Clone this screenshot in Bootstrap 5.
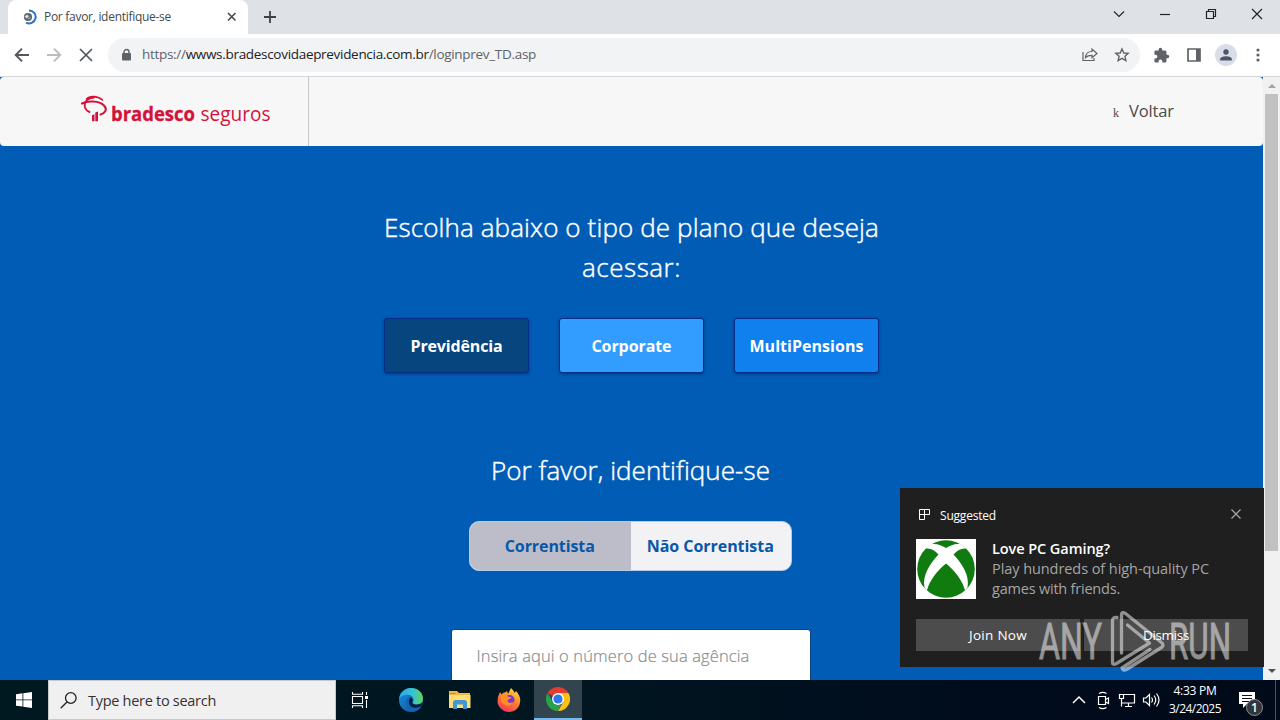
<!DOCTYPE html>
<html lang="pt-BR">
<head>
    <meta charset="UTF-8">
    <meta name="viewport" content="width=device-width, initial-scale=1">
    <title>Por favor, identifique-se</title>
    <link href="https://cdn.jsdelivr.net/npm/bootstrap@5.3.0/dist/css/bootstrap.min.css" rel="stylesheet">
    <style>
        body {
            width: 1280px;
            height: 720px;
            font-family: "Open Sans", "Noto Sans", sans-serif;
            font-size: 14px;
            line-height: 1;
        }
        svg { display: block; flex: none; }
        span, h1, h2, p { white-space: nowrap; }

        /* browser window */
        .tab-strip { height: 34px; background: #dee1e6; padding-left: 8px; }
        .browser-tab {
            width: 240px;
            height: 34px;
            padding: 0 10px 0 14px;
            background: #fff;
            border-radius: 8px 8px 0 0;
            font-size: 12px;
            color: #45494d;
        }
        .toolbar-row { height: 43px; padding: 0 13px 0 14px; background: #fff; border-bottom: 1px solid #d5d7da; }
        .address-bar {
            width: 1032px;
            height: 34px;
            margin-left: 14px;
            padding: 0 10px 0 11px;
            border-radius: 17px;
            background: #f1f3f4;
            font-size: 13.5px;
            color: #5f6368;
        }
        .address-bar b { font-weight: 400; color: #202124; }
        .avatar-dot { width: 22px; height: 22px; border-radius: 50%; background: #dadce8; }

        /* page */
        .page-view { height: 603px; }
        .page-body { width: 1263px; background: #005cb5; }
        .page-body > * { flex: none; }
        .site-header { height: 69px; background: #f7f7f7; border-radius: 4px; }
        .brand-cell { width: 309px; border-right: 1px solid #c8c8c8; padding: 18px 0 0 80px; }
        .back-link { padding: 0 89px 0 0; color: #4a4a4a; font-size: 16.5px; }
        .back-link small { width: 7px; font-family: "Liberation Serif", serif; font-size: 12px; margin: 3px 9px 0 0; }
        .page-title {
            font-family: "Open Sans", "Noto Sans", sans-serif;
            font-size: 26px;
            font-weight: 300;
            line-height: 40px;
            color: #fff;
            -webkit-text-stroke: .45px #fff;
        }
        .plan-row { gap: 30px; margin-top: 31px; }
        .plan-btn {
            width: 145px;
            height: 55px;
            padding: 0;
            border: 1px solid #052c86;
            border-radius: 3px;
            box-shadow: 0 1px 3px rgba(0, 20, 80, .55);
            color: #fff;
            font-size: 16px;
            font-weight: 700;
        }
        .plan-a { background: #07457f; }
        .plan-b { background: #339cff; }
        .plan-c { background: #0f80ee; }
        .ident-block { padding-right: 2px; }
        .client-switch { width: 323px; height: 50px; border-radius: 10px; border: 1px solid #b5cbea; background: #f2f2f5; overflow: hidden; }
        .client-switch button { width: 50%; height: 100%; border: 0; padding: 0 1px 0 0; background: none; color: #0857a8; font-size: 16px; font-weight: 700; }
        .client-switch .picked { background: #bdbdc9; }
        .agency-input {
            width: 360px;
            height: 55px;
            padding: 0 24px 2px 25px;
            background: #fff;
            border: 1px solid #0a478b;
            border-radius: 3px 3px 0 0;
            border-bottom: 0;
            color: #8c8c8c;
            font-size: 16.5px;
            font-weight: 300;
            -webkit-text-stroke: .2px #8c8c8c;
        }
        .scroll-rail { width: 17px; background: #f1f1f1; }
        .scroll-thumb { width: 13px; height: 457px; background: #c1c1c1; }

        /* toast */
        .os-toast {
            right: 16px;
            top: 488px;
            width: 364px;
            height: 179px;
            padding: 16px;
            background: #1f1f1f;
            color: #fff;
        }
        .toast-action { width: 164px; height: 32px; padding-top: 1px; background: #4c4c4c; font-size: 13.5px; }
        .watermark { left: 1036px; top: 606px; }

        /* taskbar */
        .task-bar { height: 40px; background: linear-gradient(90deg, #001820 0, #001620 45%, #000b1c 80%, #000a18 100%); color: #fff; }
        .task-cell { width: 48px; height: 40px; }
        .task-search { width: 288px; height: 40px; padding: 2px 0 0 11px; background: #f0f0f0; border: 1px solid #c9c9c9; color: #333; font-size: 14.5px; }
        .task-active { background: #32444d; border-bottom: 2px solid #76b9ed; }
        .clock-cell { width: 60px; font-size: 12px; line-height: 18px; }
    </style>
</head>
<body class="d-flex flex-column overflow-hidden position-relative">

    <div class="tab-strip d-flex align-items-center">
        <div class="browser-tab d-flex align-items-center">
            <svg width="16" height="16" viewBox="0 0 16 16">
                <circle cx="6" cy="8" r="4.100" fill="#5f6368"/>
                <path d="M3 7.500l2.500-1.500 1 1.500-2 1.500zM6 10l2.500-1.500" fill="#dfe3e6" stroke="#dfe3e6" stroke-width=".8"/>
                <path d="M7 1.500a6.500 6.500 0 1 1-3 12.200" fill="none" stroke="#2f6fce" stroke-width="2"/>
            </svg>
            <span id="t-tab" style="margin-left: 6px">Por favor, identifique-se</span>
            <svg class="ms-auto" width="12" height="12" viewBox="0 0 12 12" stroke="#45494d" stroke-width="1.600"><path d="M2 2l7.500 7.500M9.500 2L2 9.500"/></svg>
        </div>
        <svg style="margin-left: 15px" width="14" height="14" viewBox="0 0 14 14" stroke="#3c4043" stroke-width="1.800"><path d="M7 1v12M1 7h12"/></svg>
        <svg class="ms-auto" width="170" height="34" viewBox="1110 0 170 34" fill="none" stroke="#222" stroke-width="1.100">
            <path d="M1114 11.500l5 5 5-5"/>
            <path d="M1160 14.500h10" stroke-width="1.200"/>
            <path d="M1206.500 11.500h7v7h-7zM1208.500 11.500v-2h7v7h-2" stroke-width="1.200"/>
            <path d="M1252 9l10 10M1262 9l-10 10" stroke-width="1.200"/>
        </svg>
    </div>

    <div class="toolbar-row d-flex align-items-center">
        <svg width="80" height="16" viewBox="14 0 80 16" fill="none" stroke="#53575b" stroke-width="1.900">
            <path d="M29 8H16M22 1.700L15.700 8l6.300 6.300"/>
            <path d="M47 8h13M54 1.700L60.300 8 54 14.300" stroke="#babcbe"/>
            <path d="M80 2l12 12M92 2L80 14" stroke-width="1.700"/>
        </svg>
        <div class="address-bar d-flex align-items-center">
            <svg width="14" height="14" viewBox="0 0 14 14"><rect x="3" y="5" width="9" height="7.500" rx="1" fill="#5f6368"/><path d="M5 6V4a2.500 2.500 0 0 1 5 0v2" fill="none" stroke="#5f6368" stroke-width="1.400"/></svg>
            <span id="t-url" style="margin-left: 9px">https://<b>wwws.bradescovidaeprevidencia.com.br</b>/loginprev_TD.asp</span>
            <svg class="ms-auto" width="16" height="16" viewBox="0 0 16 16" fill="none" stroke="#5f6368" stroke-width="1.200"><path d="M1 5v8.500h11V11"/><path d="M3.500 10.500c.3-4 2.700-6 6.500-6V2l5 4.500-5 4.300V8.300c-3 0-5 .6-6.500 2.200z"/></svg>
            <svg style="margin-left: 16px" width="16" height="16" viewBox="0 0 16 16" fill="none" stroke="#5f6368" stroke-width="1.400"><path d="M8 2l1.800 4 4.400.4-3.300 2.900 1 4.200L8 11.300l-3.900 2.200 1-4.200L1.800 6.400 6.200 6z"/></svg>
        </div>
        <svg style="margin-left: 13px" width="17" height="17" viewBox="0 0 24 24" fill="#5f6368"><path d="M20.500 11H19V7a2 2 0 0 0-2-2h-4V3.500a2.500 2.500 0 0 0-5 0V5H4a2 2 0 0 0-2 2v3.800h1.500a2.700 2.700 0 0 1 0 5.400H2V20a2 2 0 0 0 2 2h3.800v-1.500a2.700 2.700 0 0 1 5.400 0V22H17a2 2 0 0 0 2-2v-4h1.500a2.500 2.500 0 0 0 0-5z"/></svg>
        <svg style="margin-left: 17px" width="14" height="14" viewBox="0 0 14 14"><path d="M1 1h12v12H1z" fill="none" stroke="#5f6368" stroke-width="1.700"/><path d="M9 1h4v12H9z" fill="#5f6368"/></svg>
        <div class="avatar-dot d-flex align-items-center justify-content-center" style="margin-left: 14px">
            <svg width="14" height="14" viewBox="0 0 14 14" fill="#4c5468"><circle cx="7" cy="4" r="2.700"/><path d="M1.200 12.500v-1.500C1.200 9 5 8.200 7 8.200s5.800.8 5.800 2.800v1.500z"/></svg>
        </div>
        <svg style="margin-left: 19px" width="4" height="16" viewBox="0 0 4 16" fill="#5f6368"><circle cx="2" cy="3" r="1.600"/><circle cx="2" cy="8" r="1.600"/><circle cx="2" cy="13" r="1.600"/></svg>
    </div>

    <div class="page-view d-flex">
        <main class="page-body d-flex flex-column align-items-center overflow-hidden">
            <header class="site-header d-flex w-100">
                <div class="brand-cell">
                    <svg width="196" height="36" viewBox="80 95 196 36" font-family="Open Sans, sans-serif" fill="#d3123a">
                        <g fill="none" stroke="#d3123a" stroke-linecap="round">
                            <path d="M86.500 99C89.500 95.700 97 95.500 102.500 100" stroke-width="1.600"/>
                            <path d="M82 103.500C87 100.700 99 100.500 104 105.500C108 110 104.500 113.500 100.500 114.500" stroke-width="2.100"/>
                            <path d="M94 97.500C88 97.500 83.500 102 85 107.500c.8 2.300 2.500 3.800 4.500 4.500" stroke-width="1.900"/>
                        </g>
                        <path d="M92 115.200l2.500-1v7H92zM95.300 112.500l2.700-1v9.700h-2.700z"/>
                        <text x="111" y="121" font-size="19.500" font-weight="700" textLength="84" lengthAdjust="spacingAndGlyphs" stroke="#d3123a" stroke-width=".3">bradesco</text>
                        <text x="200.500" y="121" font-size="19.500" textLength="70" lengthAdjust="spacingAndGlyphs">seguros</text>
                    </svg>
                </div>
                <div class="back-link d-flex align-items-center ms-auto"><small>k</small><span id="t-back">Voltar</span></div>
            </header>

            <h1 class="page-title text-center mb-0" style="margin-top: 61px"><span id="t-h1">Escolha abaixo o tipo de plano que deseja</span><br><span id="t-h1b">acessar:</span></h1>
            <div class="plan-row d-flex">
                <button class="btn plan-btn plan-a"><span id="t-p1">Previdência</span></button>
                <button class="btn plan-btn plan-b"><span id="t-p2">Corporate</span></button>
                <button class="btn plan-btn plan-c"><span id="t-p3">MultiPensions</span></button>
            </div>

            <div class="ident-block d-flex flex-column align-items-center">
                <h2 class="page-title mb-0" style="margin-top: 77px"><span id="t-h2">Por favor, identifique-se</span></h2>
                <div class="client-switch d-flex" style="margin-top: 31px">
                    <button class="picked"><span id="t-c1">Correntista</span></button>
                    <button><span id="t-c2">Não Correntista</span></button>
                </div>
                <div class="agency-input d-flex align-items-center" style="margin-top: 58px"><span id="t-ag">Insira aqui o número de sua agência</span></div>
            </div>
        </main>
        <div class="scroll-rail d-flex flex-column align-items-center">
            <svg width="17" height="17" viewBox="0 0 17 17" fill="#a3a3a3"><path d="M5 11l4-4 4 4z"/></svg>
            <div class="scroll-thumb"></div>
            <svg class="mt-auto" width="17" height="17" viewBox="0 0 17 17" fill="#505050"><path d="M5 6l4 4 4-4z"/></svg>
        </div>
    </div>

    <footer class="task-bar d-flex align-items-center">
        <div class="task-cell d-flex align-items-center justify-content-center">
            <svg width="16" height="16" viewBox="0 0 16 16" fill="#fff"><path d="M0 2.200L6.500 1.300v6.200H0zM7.300 1.200L16 0v7.500H7.300zM0 8.300h6.500v6.300L0 13.700zM7.300 8.300H16V16l-8.700-1.300z"/></svg>
        </div>
        <div class="task-search d-flex align-items-center">
            <svg width="18" height="18" viewBox="0 0 18 18" fill="none" stroke="#222" stroke-width="1.300"><circle cx="10.800" cy="6" r="5.300"/><path d="M7 10L.7 16.300"/></svg>
            <span id="t-search" style="margin-left: 10px">Type here to search</span>
        </div>
        <div class="task-cell d-flex align-items-center justify-content-center">
            <svg width="18" height="16" viewBox="0 0 18 16" fill="none" stroke="#fff" stroke-width="1.100"><path d="M1.500 4.500h10v7h-10zM1.500 0v2.200h10V0M1.500 16v-2.200h10V16M15.500 0v3M15.500 8v8"/><path d="M14 4h3v3h-3z" fill="#fff" stroke="none"/></svg>
        </div>
        <div class="task-cell d-flex align-items-center justify-content-center" style="margin-left: 3px">
            <svg width="24" height="24" viewBox="0 0 24 24">
                <defs>
                    <linearGradient id="edgeTop" x1="0" x2="1"><stop offset="0" stop-color="#2aa8e8"/><stop offset=".6" stop-color="#38c5cf"/><stop offset="1" stop-color="#62d45a"/></linearGradient>
                    <linearGradient id="edgeLow" x1="0" x2="1" y2="1"><stop offset="0" stop-color="#1b8fe0"/><stop offset="1" stop-color="#114e9b"/></linearGradient>
                </defs>
                <circle cx="12" cy="12" r="12" fill="url(#edgeLow)"/>
                <path d="M0 11C1 4 6 0 12 0c7 0 12 5 12 10.500 0 4-3 6-6 6-2.500 0-4.500-1-4-2.200C15.500 12 14.500 7 9 6.800 4.500 6.700 1 9 0 11z" fill="url(#edgeTop)"/>
                <path d="M10.500 9c-3 5 0 11 6 11 2.500 0 4.300-.8 5.500-1.700l1.500-3.500C21 16.500 14 18 13 14.500c1.500-1.500 1-4.500-2.500-5.500z" fill="#071f38"/>
                <path d="M8.500 10c-4 5-1 12.500 6 13.800 4 -.8 6.500-3 8-5.600-3 2-12 3-12.500-3.500C9.900 12 11 10 12 9.300c-1.200-.4-2.500 0-3.500.7z" fill="#1464b4"/>
            </svg>
        </div>
        <div class="task-cell d-flex align-items-center justify-content-center" style="margin-left: 1px">
            <svg width="22" height="20" viewBox="0 0 22 20"><path d="M0 1h8l2 2h11v15H0z" fill="#f5b93d"/><path d="M0 5h21.500v13H0z" fill="#ffdc74"/><path d="M4 19v-7.500L6 10h10l2 1.500V19h-4v-4.500H8V19z" fill="#3f98d4"/><path d="M1 3h6v1H1z" fill="#d9822b"/></svg>
        </div>
        <div class="task-cell d-flex align-items-center justify-content-center" style="margin-left: 1px">
            <svg width="24" height="24" viewBox="0 0 24 24">
                <defs><linearGradient id="foxFire" x1=".8" y1="0" x2=".3" y2="1"><stop offset="0" stop-color="#ffe14a"/><stop offset=".45" stop-color="#ff8a2a"/><stop offset="1" stop-color="#f2335f"/></linearGradient></defs>
                <path d="M1 9l2-5 1.500 2.500C5.500 5 7 4.500 8 4.500L10 3l1 3 3-6c1.500 1.500 3 3 3.500 5L19 3c3 3 4.500 6.500 4.200 10C23 19.500 18 24 12 24S.5 19 .5 13z" fill="url(#foxFire)"/>
                <circle cx="12.500" cy="12" r="5" fill="#7a35d8"/>
                <path d="M3.500 8c3-1.200 5.500-1 8 .7l3 .8c-1.500 2-3.500 1.500-4 3.500.8 2.500 4.500 2 6.500.5-1 5-12 6-12.500-1z" fill="#ff8f24"/>
            </svg>
        </div>
        <div class="task-cell task-active d-flex align-items-center justify-content-center" style="margin-left: 1px">
            <svg width="24" height="24" viewBox="0 0 24 24">
                <path d="M12 12L1.600 6A12 12 0 0 1 22.400 6z" fill="#e33b2e"/>
                <path d="M12 12V6h10.400A12 12 0 0 1 12 24l5.200-9z" fill="#fbc116"/>
                <path d="M1.600 6l5.200 9c2 3 5 3.500 8.200 2.500L12 24A12 12 0 0 1 1.600 6z" fill="#29a04a"/>
                <circle cx="12" cy="12" r="6" fill="#fff"/><circle cx="12" cy="12" r="4.600" fill="#2f79ea"/>
            </svg>
        </div>

        <svg class="ms-auto" width="92" height="24" viewBox="1070 688 92 24" fill="none" stroke="#fff" stroke-width="1.200">
            <path d="M1073 703l6-6 6 6" stroke-width="1.500"/>
            <path d="M1098.500 696.500h7v8h-7zM1105.500 699.500l3-1.500v5.500l-3-1.500M1099 693.500c2.500-1.500 5-1.500 7.500 0M1099 707.500c2.500 1.500 5 1.500 7.500 0"/>
            <path d="M1124 694.500h10.500v8.500h-13v-4M1119.500 694.500h4v4h-4zM1121.500 698.500v8M1128.500 703v3.500M1125 706.500h7"/>
            <path d="M1143.500 698h2.500l3.500-3.500v11l-3.500-3.500h-2.500zM1151.500 697.500q2 2.500 0 5M1154 695.500q3.500 4.500 0 9M1156.500 693.500q5 6.500 0 13"/>
        </svg>
        <div class="clock-cell d-flex flex-column align-items-center" style="margin-left: 3px"><span id="t-time">4:33 PM</span><span id="t-date">3/24/2025</span></div>
        <svg style="margin-left: 14px" width="41" height="40" viewBox="1239 680 41 40">
            <path d="M1239 692h16v12h-8l-4 4v-4h-4z" fill="#fff"/>
            <path d="M1242 695.500h10M1242 698.500h10M1242 701.500h7" stroke="#05101c" stroke-width="1.200"/>
            <circle cx="1254.500" cy="707.500" r="8" fill="#30363c" stroke="#8b9095"/>
            <text x="1254.500" y="712" font-family="Open Sans, sans-serif" font-size="12" font-weight="600" text-anchor="middle" fill="#fff">1</text>
            <path d="M1275.500 680v40" stroke="#4d5460"/>
        </svg>
    </footer>

    <div class="os-toast position-absolute d-flex flex-column">
        <div class="d-flex align-items-center" style="height: 20px; font-size: 12px">
            <svg style="margin-left: 3px" width="12" height="12" viewBox="0 0 12 12" fill="none" stroke="#fff"><path d="M.5 1.500h5v10h-5zM.5 6.500h10v-5h-5"/></svg>
            <span id="t-sug" style="margin: 3px 0 0 9px">Suggested</span>
            <svg class="ms-auto" style="margin-right: 7px" width="10" height="10" viewBox="0 0 10 10" stroke="#a8a8a8" stroke-width="1.200"><path d="M.5.500l9 9M9.500.500l-9 9"/></svg>
        </div>
        <div class="d-flex" style="margin-top: 15px">
            <svg width="60" height="60" viewBox="0 0 60 60">
                <path d="M0 0h60v60H0z" fill="#fff"/>
                <circle cx="30" cy="30" r="28.800" fill="#107c10"/>
                <path d="M14.500 5.500C20 4 25.500 6.500 30 9c4.500-2.500 10-5 15.500-3.500l5.500 4.500C47 8.500 41.500 11 37.500 15.500 46 24 54 37 51.500 48.500l-2.500 3C47 42 38.500 31.500 30 24.500 21.500 31.500 13 42 11 51.500l-2.500-3C6 37 14 24 22.500 15.500 18.500 11 13 8.500 9 10z" fill="#fff"/>
            </svg>
            <div class="d-flex flex-column" style="margin-left: 16px; font-size: 14.500px; line-height: 20px; color: #a5a5a5">
                <span class="text-white" style="font-weight: 600"><span id="t-love">Love PC Gaming?</span></span>
                <span><span id="t-play">Play hundreds of high-quality PC</span></span>
                <span><span id="t-games">games with friends.</span></span>
            </div>
        </div>
        <div class="d-flex justify-content-between" style="margin-top: 20px">
            <div class="toast-action d-flex align-items-center justify-content-center"><span id="t-join">Join Now</span></div>
            <div class="toast-action d-flex align-items-center justify-content-center"><span id="t-dis">Dismiss</span></div>
        </div>
    </div>

    <svg class="watermark position-absolute" width="200" height="68" viewBox="1036 606 200 68" fill="#fff" opacity=".5" font-family="Roboto, sans-serif">
        <g stroke="#fff" stroke-width=".9">
            <text x="1039" y="659" font-size="50" textLength="63" lengthAdjust="spacingAndGlyphs">ANY</text>
            <text x="1169" y="659" font-size="50" textLength="62" lengthAdjust="spacingAndGlyphs">RUN</text>
        </g>
        <g fill="none" stroke="#fff" stroke-width="3.300" stroke-linejoin="round" stroke-linecap="round">
            <path d="M1121.500 653v-38q0-4 4-1.500l36 29q3 2.500 0 5l-35 22q-4 1.500-4.500-1.500l28-18.500"/>
            <path d="M1117 617.500q-4.500-.5-4.500 3v42q0 3 4 1l33-20.500-22-18"/>
        </g>
    </svg>

    <script>
        // Fit every label to its width on screen, whatever face the stack resolves to
        const labelWidths = {
            't-tab': 127, 't-url': 394, 't-back': 45,
            't-h1': 495, 't-h1b': 99, 't-h2': 279,
            't-p1': 92, 't-p2': 80, 't-p3': 114,
            't-c1': 90, 't-c2': 127, 't-ag': 273,
            't-search': 128, 't-time': 43, 't-date': 52,
            't-sug': 56, 't-love': 118, 't-play': 217, 't-games': 128,
            't-join': 58, 't-dis': 46
        };
        Object.keys(labelWidths).forEach(id => {
            const label = document.getElementById(id);
            const gap = labelWidths[id] - label.getBoundingClientRect().width;
            label.style.letterSpacing = `${gap / label.textContent.length}px`;
        });
    </script>
    <script src="https://cdn.jsdelivr.net/npm/bootstrap@5.3.0/dist/js/bootstrap.bundle.min.js"></script>
</body>
</html>
